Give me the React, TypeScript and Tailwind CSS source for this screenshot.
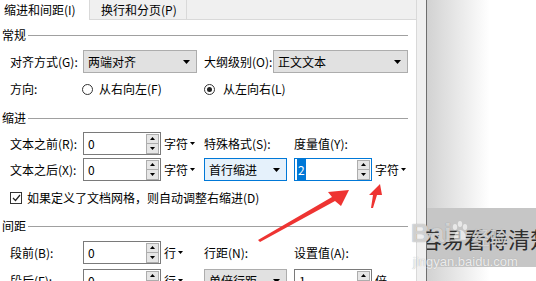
import React from 'react'

function Caret() {
  return (
    <svg width="7" height="4" viewBox="0 0 7 4">
      <path d="M0 0h7L3.5 4z" fill="#000" />
    </svg>
  )
}

function SmallCaret() {
  return (
    <svg width="5" height="3" viewBox="0 0 5 3" className="ml-[2px]">
      <path d="M0 0h5L2.5 3z" fill="#000" />
    </svg>
  )
}

function Header({ title }: { title: string }) {
  return (
    <div className="flex items-center h-[16px] pl-[2px] pr-[8px]">
      <span className="leading-none">{title}</span>
      <div className="flex-1 h-px bg-[#a0a0a0] ml-[2px]" />
    </div>
  )
}

function Spin({ value, focused = false }: { value: string; focused?: boolean }) {
  return (
    <div
      className={`w-[78px] h-[23px] bg-white border flex items-center ${
        focused ? 'border-[#0078d7]' : 'border-[#7a7a7a]'
      }`}
    >
      <div className={`flex-1 leading-none ${focused ? 'pl-[2px]' : 'pl-[4px]'}`}>
        {focused ? (
          <span className="bg-[#0078d7] text-white px-px py-[2px]">{value}</span>
        ) : (
          value
        )}
      </div>
      <div className="flex flex-col mr-px">
        <div className="w-[13px] h-[10px] bg-[#e6e6e6] border border-[#adadad] flex items-center justify-center">
          <svg width="5" height="3" viewBox="0 0 5 3">
            <path d="M0 3h5L2.5 0z" fill="#000" />
          </svg>
        </div>
        <div className="w-[13px] h-[10px] bg-[#e6e6e6] border border-t-0 border-[#adadad] flex items-center justify-center">
          <svg width="5" height="3" viewBox="0 0 5 3">
            <path d="M0 0h5L2.5 3z" fill="#000" />
          </svg>
        </div>
      </div>
    </div>
  )
}

function Select({ value, width, hot = false }: { value: string; width: string; hot?: boolean }) {
  return (
    <div
      className={`${width} h-[23px] border flex items-center justify-between pl-[4px] pr-[6px] ${
        hot ? 'border-[#0078d7] bg-[#e5f1fb]' : 'border-[#adadad] bg-[#e1e1e1]'
      }`}
    >
      <span className="leading-none">{value}</span>
      <Caret />
    </div>
  )
}

function Unit({ text }: { text: string }) {
  return (
    <div className="ml-[3px] w-[40px] flex items-center">
      <span className="leading-none">{text}</span>
      <SmallCaret />
    </div>
  )
}

function Radio({ checked }: { checked: boolean }) {
  return (
    <div className="w-[11px] h-[11px] rounded-full border border-[#333] bg-white flex items-center justify-center">
      {checked && <div className="w-[5px] h-[5px] rounded-full bg-[#222]" />}
    </div>
  )
}

export default function App() {
  return (
    <div className="relative flex w-[536px] h-[281px] overflow-hidden bg-white text-[12px] text-black font-['Noto_Sans_CJK_SC','Noto_Sans',sans-serif]">
      {/* dialog */}
      <div className="w-[426px] h-full shrink-0 bg-[#f0f0f0] flex">
        <div className="w-[417px] h-full flex flex-col">
          <div className="flex h-[20px] shrink-0">
            <div className="w-[89px] bg-white pl-[4px] leading-[20px]">缩进和间距(I)</div>
            <div className="w-[98px] bg-[#f0f0f0] border-x border-b border-[#d9d9d9] pl-[11px] leading-[19px]">
              换行和分页(P)
            </div>
            <div className="flex-1 border-b border-r border-[#d9d9d9]" />
          </div>

          <div className="flex-1 min-h-0 overflow-hidden bg-white border-r border-[#d9d9d9]">
            <div className="mt-[7px]">
              <Header title="常规" />
            </div>

            <div className="mt-[7px] pl-[10px] flex items-center h-[23px]">
              <div className="w-[73px]">对齐方式(G):</div>
              <Select value="两端对齐" width="w-[114px]" />
              <div className="ml-[7px] w-[69px]">大纲级别(O):</div>
              <Select value="正文文本" width="w-[135px]" />
            </div>

            <div className="mt-[8px] pl-[10px] flex items-center h-[16px]">
              <div className="w-[72px]">方向:</div>
              <div className="w-[122px] flex items-center">
                <Radio checked={false} />
                <span className="ml-[6px]">从右向左(F)</span>
              </div>
              <div className="flex items-center">
                <Radio checked />
                <span className="ml-[8px]">从左向右(L)</span>
              </div>
            </div>

            <div className="mt-[13px]">
              <Header title="缩进" />
            </div>

            <div className="mt-[6px] pl-[10px] flex items-center h-[23px]">
              <div className="w-[73px]">文本之前(R):</div>
              <Spin value="0" />
              <Unit text="字符" />
              <div className="w-[90px]">特殊格式(S):</div>
              <div>度量值(Y):</div>
            </div>

            <div className="mt-[3px] pl-[10px] flex items-center h-[23px]">
              <div className="w-[73px]">文本之后(X):</div>
              <Spin value="0" />
              <Unit text="字符" />
              <div className="w-[90px]">
                <Select value="首行缩进" width="w-[83px]" hot />
              </div>
              <Spin value="2" focused />
              <Unit text="字符" />
            </div>

            <div className="mt-[9px] pl-[10px] flex items-center h-[16px]">
              <div className="w-[12px] h-[12px] border border-[#333] bg-white flex items-center justify-center">
                <svg width="9" height="8" viewBox="0 0 9 8">
                  <path d="M1 4l2.5 2.5L8 1" stroke="#222" strokeWidth="1.2" fill="none" />
                </svg>
              </div>
              <span className="ml-[5px]">如果定义了文档网格，则自动调整右缩进(D)</span>
            </div>

            <div className="mt-[12px]">
              <Header title="间距" />
            </div>

            <div className="mt-[7px] pl-[10px] flex items-center h-[23px]">
              <div className="w-[73px]">段前(B):</div>
              <Spin value="0" />
              <Unit text="行" />
              <div className="w-[90px]">行距(N):</div>
              <div>设置值(A):</div>
            </div>

            <div className="mt-[5px] pl-[10px] flex items-center h-[23px]">
              <div className="w-[73px]">段后(F):</div>
              <Spin value="0" />
              <Unit text="行" />
              <div className="w-[90px]">
                <Select value="单倍行距" width="w-[83px]" />
              </div>
              <Spin value="1" />
              <div className="ml-[3px]">倍</div>
            </div>
          </div>
        </div>
      </div>

      <div className="w-px h-full shrink-0 bg-[#6e6e6e]" />

      {/* document behind */}
      <div className="flex-1 h-full flex flex-col">
        <div className="h-[208px] shrink-0 bg-linear-to-r from-[#d2d2d2] via-white to-white" />
        <div className="h-[59px] shrink-0 bg-[#c6c6c6] overflow-hidden flex items-center">
          <div className="ml-[-7px] whitespace-nowrap text-[22px] leading-none text-[#2e2e2e]">
            容易看得清楚
          </div>
        </div>
        <div className="flex-1 bg-linear-to-r from-[#d2d2d2] via-white to-white" />
      </div>

      {/* baidu watermark */}
      <div className="absolute left-[411px] top-[220px] flex items-end text-white/60 [text-shadow:0_0_1px_#8a8a8a] pointer-events-none">
        <span className="text-[26px] leading-none font-bold font-['Liberation_Sans',sans-serif]">Bai</span>
        <svg width="18" height="20" viewBox="0 0 18 20" className="mb-[5px] opacity-60">
          <ellipse cx="4" cy="6" rx="2.2" ry="3" fill="#fff" />
          <ellipse cx="9" cy="3" rx="2.2" ry="3" fill="#fff" />
          <ellipse cx="14" cy="6" rx="2.2" ry="3" fill="#fff" />
          <path d="M9 9c-4 0-6 5-6 8s3 3 6 2 6 1 6-2-2-8-6-8z" fill="#fff" />
        </svg>
        <span className="text-[18px] leading-none ml-[2px]">经验</span>
      </div>
      <div className="absolute left-[413px] top-[255px] text-[13px] leading-none text-white/80 [text-shadow:0_0_1px_#9a9a9a] font-['Liberation_Sans',sans-serif] pointer-events-none">
        jingyan.baidu.com
      </div>

      {/* red arrows */}
      <svg className="absolute left-0 top-0 pointer-events-none" width="536" height="281" viewBox="0 0 536 281">
        <polygon
          points="258,240 332,197 328,192 349,190 341,206 335,201 260,242"
          fill="#ee3432"
        />
        <polygon points="371,208 373,195 369,195 380,184 382,195 377,195 373,208" fill="#ee3432" />
      </svg>
    </div>
  )
}
